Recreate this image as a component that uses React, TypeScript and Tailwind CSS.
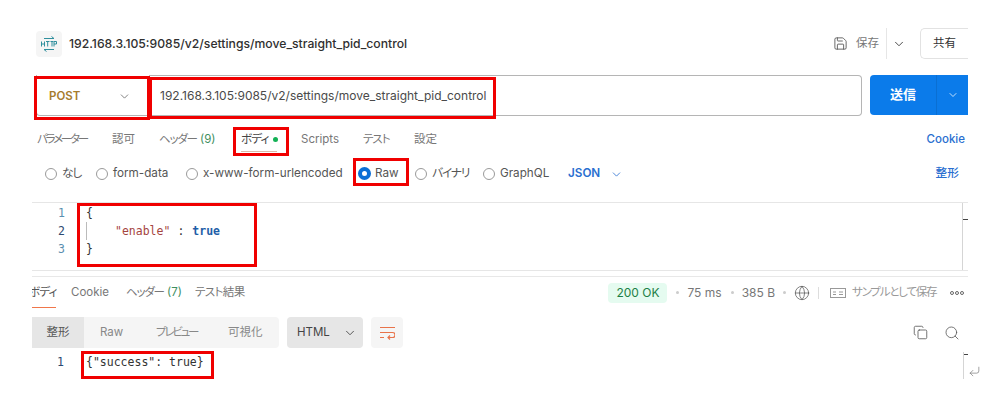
import React from 'react';
import { ChevronDown, Copy, Globe, Search, CornerDownLeft, Save } from 'lucide-react';

const sans = "font-['Inter','Noto_Sans_CJK_JP',sans-serif]";
const mono = "font-['DejaVu_Sans_Mono','Noto_Sans_CJK_JP',monospace]";

const Mark: React.FC<{ className: string }> = ({ className }) => (
  <span className={`absolute border-[3px] border-[#f00000] pointer-events-none ${className}`} />
);

const Radio: React.FC<{ label: string; width: string; checked?: boolean; tight?: string }> = ({ label, width, checked, tight }) => (
  <div className={`flex items-center shrink-0 ${width}`}>
    {checked ? (
      <span className="w-[13px] h-[13px] rounded-full border-[4px] border-[#0b6fd6] mr-[4px] shrink-0" />
    ) : (
      <span className="w-[12px] h-[12px] rounded-full border border-[#9a9a9a] mr-[5px] shrink-0" />
    )}
    <span className={`text-[#555] whitespace-nowrap ${tight ?? ''}`}>{label}</span>
  </div>
);

export default function App() {
  return (
    <div className={`${sans} [font-feature-settings:'palt'] w-[993px] h-[413px] bg-white overflow-hidden pt-[28px] pl-[32px] text-[12px] text-[#666] relative`}>
      <div className="w-[936px]">
        {/* title row */}
        <div className="flex items-center h-[31px]">
          <div className="w-[26px] h-[26px] ml-[4px] mr-[7px] rounded-[4px] bg-[#f5f5f5] flex items-center justify-center">
            <svg width="18" height="18" viewBox="0 0 18 18" fill="none" stroke="#2f8f9d" strokeWidth="1">
              <path d="M4 3.500h10M11.500 1.500l2.500 2" />
              <path d="M4 14.500h10M6.500 16.500l-2.500-2" />
              <path d="M1.500 6.500v5M4.500 6.500v5M1.500 9h3M6 6.500h3.500M7.700 6.500v5M10.500 6.500h3M12 6.500v5M14 11.500v-5h2.500v2.500h-2.500" />
            </svg>
          </div>
          <span className="text-[#303030] text-[12.200px] font-medium whitespace-nowrap pt-px">192.168.3.105:9085/v2/settings/move_straight_pid_control</span>
          <div className="ml-auto flex items-center h-full">
            <Save className="w-[15px] h-[15px] text-[#555]" strokeWidth={1.400} />
            <span className="ml-[8px] text-[#777] text-[11.500px]">保存</span>
            <span className="ml-[7px] w-px h-[31px] bg-[#e6e6e6]" />
            <ChevronDown className="ml-[5px] w-[14px] h-[14px] text-[#333]" strokeWidth={1.500} />
            <span className="ml-[14px] w-[48px] h-[31px] rounded-l-[5px] border border-r-0 border-[#e2e2e2] flex items-center justify-center text-[#333] text-[11.500px]">共有</span>
          </div>
        </div>

        {/* request row */}
        <div className="flex items-stretch mt-[16px] h-[41px]">
          <div className="ml-[4px] w-[113px] relative border-l border-b border-[#b5b5b5] rounded-bl-[4px] flex items-center pl-[12px] pt-[3px] shrink-0">
            <span className="text-[#a67c2d] font-semibold text-[11.500px]">POST</span>
            <ChevronDown className="ml-[38px] w-[13px] h-[13px] text-[#666]" strokeWidth={1.500} />
            <Mark className="left-[-3px] top-[1px] w-[116px] h-[44px]" />
          </div>
          <div className="w-[713px] relative border border-[#b5b5b5] border-l-0 rounded-r-[4px] flex items-center pl-[11px] shrink-0">
            <span className="text-[#4a4a4a] text-[12px] whitespace-nowrap">192.168.3.105:9085/v2/settings/move_straight_pid_control</span>
            <Mark className="left-0 top-[1px] w-[347px] h-[42px]" />
          </div>
          <div className="ml-[8px] w-[98px] h-[40px] bg-[#0b7bea] rounded-l-[4px] flex items-center text-white shrink-0">
            <span className="w-[66px] text-center font-bold text-[13px]">送信</span>
            <span className="w-px h-full bg-[#0a6fd3]" />
            <ChevronDown className="ml-[10px] w-[12px] h-[12px]" strokeWidth={1.500} />
          </div>
        </div>

        {/* request tabs */}
        <div className="flex items-center mt-[9px] h-[29px] text-[11.500px] text-[#777] whitespace-nowrap">
          <span className="ml-[5px] w-[75px] shrink-0 tracking-[-2.200px]">パラメーター</span>
          <span className="w-[47px] shrink-0">認可</span>
          <span className="w-[82px] shrink-0"><span className="tracking-[-1.200px]">ヘッダー</span> <span className="text-[#3f8f5f]">(9)</span></span>
          <div className="relative w-[60px] h-full flex items-center shrink-0">
            <span className="text-[#444] tracking-[-0.700px]">ボディ</span>
            <span className="ml-[4px] w-[5px] h-[5px] rounded-full bg-[#13b155]" />
            <span className="absolute left-0 w-[36px] bottom-[2px] h-px bg-[#ddb9a8]" />
            <Mark className="left-[-8px] top-[2px] w-[56px] h-[29px]" />
          </div>
          <span className="w-[62px] shrink-0">Scripts</span>
          <span className="w-[51px] shrink-0 tracking-[-1px]">テスト</span>
          <span>設定</span>
          <span className="ml-auto mr-[3px] text-[#2a6fd0] font-medium">Cookie</span>
        </div>

        {/* body types */}
        <div className="flex items-center h-[28px] mt-[6px] pl-[13px] text-[11.700px]">
          <Radio label="なし" width="w-[51px]" tight="tracking-[-1px]" />
          <Radio label="form-data" width="w-[90px]" />
          <Radio label="x-www-form-urlencoded" width="w-[172px]" />
          <div className="relative w-[57px] shrink-0">
            <Radio label="Raw" width="w-[57px]" checked />
            <Mark className="left-[-5px] top-[-7px] w-[56px] h-[28px]" />
          </div>
          <Radio label="バイナリ" width="w-[68px]" tight="tracking-[-1.100px]" />
          <Radio label="GraphQL" width="w-[85px]" />
          <span className="text-[#2a6fd0] font-semibold">JSON</span>
          <ChevronDown className="ml-[10px] w-[13px] h-[13px] text-[#2a6fd0]" strokeWidth={1.500} />
          <span className="ml-auto mr-[9px] text-[#2a6fd0] font-medium">整形</span>
        </div>

        {/* request editor */}
        <div className={`${mono} relative mt-[14px] h-[69px] border-y border-[#e6e6e6] text-[11.500px] leading-[18px] pt-px`}>
          <div className="flex"><span className="w-[33px] text-right text-[#5a8fb0]">1</span><span className="ml-[21px] text-[#333]">{'{'}</span></div>
          <div className="flex"><span className="w-[33px] text-right text-[#2c4a70]">2</span><span className="ml-[21px] w-px bg-[#bbb]" /><span className="ml-[28px] text-[#a5443f]">"enable"</span><span className="ml-[7px] text-[#333]">:</span><span className="ml-[8px] text-[#1f5ea8] font-bold">true</span></div>
          <div className="flex"><span className="w-[33px] text-right text-[#5a8fb0]">3</span><span className="ml-[21px] text-[#333]">{'}'}</span></div>
          <Mark className="left-[45px] top-0 w-[180px] h-[64px]" />
          <span className="absolute right-[5px] top-0 bottom-0 w-px bg-[#d5d5d5]" />
          <span className="absolute right-0 top-[16px] w-[5px] h-px bg-[#444]" />
        </div>

        {/* response header */}
        <div className="mt-[5px] border-t border-[#e8e8e8] flex items-center h-[32px] text-[11.500px] text-[#777] whitespace-nowrap">
          <div className="relative w-[39px] h-full flex items-center overflow-hidden shrink-0">
            <span className="ml-[-3px] text-[#555] tracking-[-0.700px]">ボディ</span>
            <span className="absolute left-0 w-[24px] bottom-0 h-px bg-[#f0764a]" />
          </div>
          <span className="w-[55px] shrink-0">Cookie</span>
          <span className="w-[69px] shrink-0"><span className="tracking-[-1.200px]">ヘッダー</span> <span className="text-[#3f8f5f]">(7)</span></span>
          <span className="tracking-[-0.600px]">テスト結果</span>
          <div className="ml-auto flex items-center text-[12px]">
            <span className="w-[59px] h-[20px] rounded-[4px] bg-[#e5fbf0] text-[#1d8046] flex items-center justify-center">200 OK</span>
            <span className="ml-[9px] w-[3px] h-[3px] rounded-full bg-[#ccc]" />
            <span className="ml-[8px]">75 ms</span>
            <span className="ml-[9px] w-[3px] h-[3px] rounded-full bg-[#ccc]" />
            <span className="ml-[8px]">385 B</span>
            <span className="ml-[8px] w-[3px] h-[3px] rounded-full bg-[#ccc]" />
            <Globe className="ml-[8px] w-[16px] h-[16px] text-[#555]" strokeWidth={1.100} />
            <span className="ml-[8px] w-px h-[12px] bg-[#ddd]" />
            <svg className="ml-[11px]" width="16" height="12" viewBox="0 0 16 12" fill="none" stroke="#999" strokeWidth="1">
              <rect x="0.500" y="1.500" width="15" height="9" />
              <path d="M3 5h3M3 7.500h3M9 5h4M9 7.500h4" />
            </svg>
            <span className="ml-[6px] text-[#999] text-[11.500px] w-[85px] tracking-[-1.200px]">サンプルとして保存</span>
            <svg className="ml-[13px] mr-[4px]" width="14" height="6" viewBox="0 0 14 6" fill="none" stroke="#666" strokeWidth="1">
              <circle cx="2" cy="3" r="1.500" />
              <circle cx="7" cy="3" r="1.500" />
              <circle cx="12" cy="3" r="1.500" />
            </svg>
          </div>
        </div>

        {/* response tools */}
        <div className="flex items-center h-[31px] mt-[9px] text-[11.500px]">
          <div className="w-[247px] h-full rounded-r-[4px] bg-[#f5f5f5] flex items-center text-[#888]">
            <span className="w-[52px] h-full bg-[#e6e6e6] flex items-center justify-center text-[#555]">整形</span>
            <span className="ml-[16px] w-[56px]">Raw</span>
            <span className="w-[72px] tracking-[-2.200px]">プレビュー</span>
            <span>可視化</span>
          </div>
          <div className="ml-[8px] w-[76px] h-full rounded-[4px] bg-[#e6e6e6] flex items-center pl-[10px] text-[#444]">
            <span>HTML</span>
            <ChevronDown className="ml-[13px] w-[14px] h-[14px]" strokeWidth={1.500} />
          </div>
          <div className="ml-[8px] w-[32px] h-full rounded-[4px] bg-[#f5f5f5] flex items-center justify-center">
            <svg width="15" height="14" viewBox="0 0 15 14" fill="none" stroke="#e8734a" strokeWidth="1.200">
              <path d="M0 1.500h15M0 6.500h12.500a2.500 2.500 0 0 1 0 5H8M10 9.500l-2 2 2 2M0 11.500h4" />
            </svg>
          </div>
          <Copy className="ml-auto w-[15px] h-[15px] text-[#555]" strokeWidth={1.300} />
          <Search className="ml-[16px] mr-[8px] w-[16px] h-[16px] text-[#555]" strokeWidth={1.200} />
        </div>

        {/* response body */}
        <div className={`${mono} relative mt-[4px] h-[27px] text-[11.500px] leading-[18px] pt-[1px] flex text-[#333]`}>
          <span className="w-[32px] text-right text-[#2c4a70]">1</span>
          <span className="ml-[22px]">{'{"success": true}'}</span>
          <Mark className="left-[49px] top-[-1px] w-[133px] h-[28px]" />
          <span className="absolute right-[4px] top-0 bottom-0 w-px bg-[#d5d5d5]" />
          <span className="absolute right-0 top-[2px] w-[4px] h-px bg-[#444]" />
          <CornerDownLeft className="absolute right-[-13px] top-[13px] w-[13px] h-[13px] text-[#555]" strokeWidth={1} />
        </div>
      </div>
    </div>
  );
}
